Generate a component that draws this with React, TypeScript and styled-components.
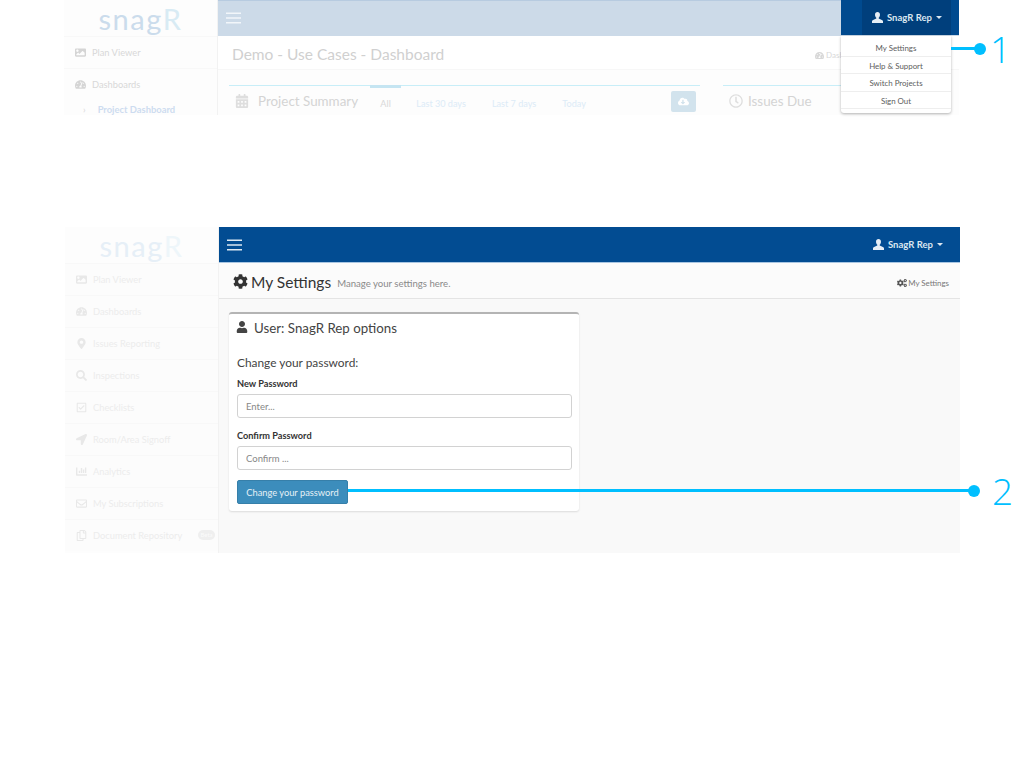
import styled, { createGlobalStyle } from "styled-components";
import {
  FaImage,
  FaTachometerAlt,
  FaCalendarAlt,
  FaRegClock,
  FaCloudDownloadAlt,
  FaUser,
  FaCog,
  FaCogs,
  FaMapMarkerAlt,
  FaSearch,
  FaRegCheckSquare,
  FaLocationArrow,
  FaChartBar,
  FaRegEnvelope,
  FaRegCopy,
} from "react-icons/fa";

const GlobalStyle = createGlobalStyle`
  html, body {
    margin: 0;
    padding: 0;
    background: #fff;
    font-family: "Lato", "Open Sans", sans-serif;
  }
  * { box-sizing: border-box; }
`;

const Page = styled.div`
  position: relative;
  width: 1024px;
  height: 768px;
  overflow: hidden;
`;

const Shot = styled.section<{ $left: number; $top: number; $height: number }>`
  display: flex;
  width: 895px;
  height: ${(p) => p.$height}px;
  margin-left: ${(p) => p.$left}px;
  margin-top: ${(p) => p.$top}px;
  overflow: hidden;
`;

const Sidebar = styled.aside`
  width: 154px;
  flex: none;
  background: #fdfdfd;
  border-right: 1px solid #f2f2f2;
`;

const Logo = styled.div<{ $faint?: boolean }>`
  height: 36px;
  display: flex;
  justify-content: center;
  align-items: center;
  font-size: 29px;
  font-weight: 400;
  letter-spacing: 1.5px;
  line-height: 35px;
  color: ${(p) => (p.$faint ? "#e6eff7" : "#cbdcec")};
  span {
    color: ${(p) => (p.$faint ? "#eef6fa" : "#d8ebf4")};
  }
`;

const NavItem = styled.div`
  height: 32px;
  display: flex;
  align-items: center;
  gap: 6px;
  padding-left: 11px;
  font-size: 9.3px;
  color: #ececec;
  border-top: 1px solid #f8f8f8;
  background: #fcfcfc;
  position: relative;
  svg {
    width: 11px;
    height: 11px;
    flex: none;
    color: #e8e8e8;
  }
`;

const TopNavItem = styled(NavItem)`
  color: #d8d8d8;
  background: #fdfdfd;
  svg {
    color: #d5d5d5;
  }
`;

const SubItem = styled.div`
  display: flex;
  align-items: center;
  gap: 12px;
  padding: 4px 0 0 19px;
  font-size: 9.4px;
  font-weight: 700;
  color: #cddcf0;
  &::before {
    content: "›";
    color: #d8d8d8;
    font-weight: 400;
  }
`;

const Beta = styled.span`
  position: absolute;
  right: 3px;
  top: 10px;
  width: 17px;
  height: 10px;
  border-radius: 5px;
  background: #efefef;
  color: #fbfbfb;
  font-size: 6px;
  line-height: 10px;
  text-align: center;
`;

const Main = styled.main<{ $bg: string }>`
  flex: 1;
  min-width: 0;
  display: flex;
  flex-direction: column;
  background: ${(p) => p.$bg};
`;

const Header = styled.header<{ $bg: string; $edge: string; $topEdge?: string }>`
  height: 36px;
  flex: none;
  display: flex;
  align-items: center;
  justify-content: space-between;
  background: ${(p) => p.$bg};
  border-bottom: 1px solid ${(p) => p.$edge};
  box-shadow: ${(p) => (p.$topEdge ? `inset 0 1px 0 ${p.$topEdge}` : "none")};
`;

const BurgerIcon = styled.svg`
  width: 15px;
  height: 12px;
  margin-left: 8px;
`;

const UserWrap = styled.div`
  width: 118px;
  height: 100%;
  display: flex;
  background: #004a8f;
  padding-left: 21px;
`;

const UserToggle = styled.div<{ $bg?: string; $right?: number }>`
  height: 100%;
  width: 89px;
  margin-right: ${(p) => p.$right || 0}px;
  padding-left: 10px;
  display: flex;
  align-items: center;
  gap: 4px;
  background: ${(p) => p.$bg || "transparent"};
  color: #dbe6f0;
  font-size: 9.5px;
  font-weight: 700;
`;

const UserGlyph = styled.svg`
  width: 11px;
  height: 11px;
  margin-bottom: 1px;
`;

const Caret = styled.i`
  width: 0;
  height: 0;
  border-left: 3px solid transparent;
  border-right: 3px solid transparent;
  border-top: 3px solid #dbe6f0;
`;

const TitleBarFaded = styled.div`
  height: 34px;
  flex: none;
  display: flex;
  align-items: center;
  justify-content: space-between;
  padding: 3px 0 0 14px;
  background: #fff;
  border-bottom: 1px solid #f7f7f7;
  color: #d0d0d0;
  font-size: 15.5px;
`;

const CrumbFaded = styled.span`
  display: flex;
  align-items: center;
  gap: 2px;
  margin: 2px 117px 0 0;
  width: 27px;
  font-size: 8px;
  color: #d8d8d8;
  white-space: nowrap;
  svg {
    flex: none;
    width: 9px;
    height: 9px;
  }
`;

const CardRow = styled.div`
  display: flex;
  gap: 23px;
  padding: 15px 0 0 11px;
`;

const FadedCard = styled.div<{ $width: number; $gap: number }>`
  width: ${(p) => p.$width}px;
  height: 30px;
  display: flex;
  align-items: center;
  border-top: 1px solid #c8eef8;
  color: #d4d4d4;
  font-size: 13.4px;
  gap: ${(p) => p.$gap}px;
  padding-left: 6px;
  svg {
    width: 14px;
    height: 14px;
    color: #dedede;
    flex: none;
  }
`;

const TabRow = styled.div`
  display: flex;
  align-items: stretch;
  align-self: stretch;
  margin-top: -1px;
  margin-left: 3px;
  flex: 1;
  font-size: 9.1px;
`;

const Tab = styled.span<{ $active?: boolean; $width: number }>`
  width: ${(p) => p.$width}px;
  text-align: center;
  padding-top: ${(p) => (p.$active ? 10 : 13)}px;
  color: ${(p) => (p.$active ? "#d8d8d8" : "#dcebf7")};
  border-top: ${(p) => (p.$active ? "3px solid #c5e5f2" : "none")};
`;

const CloudButton = styled.span`
  width: 25px;
  height: 21px;
  margin: 6px 4px 0 auto;
  display: flex;
  align-items: center;
  justify-content: center;
  background: #d2e3ed;
  border-radius: 2px;
  svg {
    width: 11px;
    height: 11px;
    color: #fff;
  }
`;

const Dropdown = styled.ul`
  position: absolute;
  left: 841px;
  top: 36px;
  width: 110px;
  height: 77px;
  margin: 0;
  padding: 3px 0 0;
  list-style: none;
  background: #fff;
  border-radius: 0 0 3px 3px;
  box-shadow: 0 1px 3px rgba(0, 0, 0, 0.3);
`;

const DropdownItem = styled.li`
  height: 17.5px;
  line-height: 18.5px;
  text-align: center;
  font-size: 7.9px;
  color: #5c5c5c;
  border-bottom: 1px solid #eeeeee;
`;

const TitleBar = styled.div`
  height: 36px;
  flex: none;
  display: flex;
  align-items: center;
  padding: 2px 0 0 14px;
  background: #fbfbfb;
  border-bottom: 1px solid #e4e4e4;
`;

const PageIcon = styled(FaCog)`
  width: 15px;
  height: 15px;
  color: #333;
  margin-right: 3px;
`;

const PageTitle = styled.h1`
  margin: 0;
  font-size: 15.5px;
  font-weight: 400;
  color: #333;
`;

const PageSub = styled.small`
  margin-left: 6px;
  margin-top: 3px;
  font-size: 9.6px;
  color: #8a8a8a;
`;

const Crumb = styled.span`
  margin: 3px 11px 0 auto;
  display: flex;
  align-items: center;
  gap: 1px;
  font-size: 7.9px;
  color: #777;
  svg {
    width: 10px;
    height: 10px;
    color: #555;
  }
`;

const Content = styled.div`
  flex: 1;
  padding: 13px 0 0 10px;
  background: #f9f9f9;
`;

const Card = styled.div`
  width: 350px;
  height: 199px;
  padding: 0 8px;
  background: #fff;
  border-top: 2px solid #b4b4b4;
  border-radius: 3px;
  box-shadow: 0 1px 2px rgba(0, 0, 0, 0.12);
`;

const CardTitle = styled.h3`
  display: flex;
  align-items: center;
  gap: 6px;
  height: 28px;
  margin: 0;
  font-size: 13.3px;
  font-weight: 400;
  color: #444;
  svg {
    width: 12px;
    height: 12px;
    margin: 0 0 3px -1px;
  }
`;

const SectionTitle = styled.h4`
  margin: 12px 0 0;
  font-size: 11.9px;
  line-height: 18px;
  font-weight: 400;
  color: #444;
`;

const Field = styled.div`
  margin-top: 5px;
  margin-bottom: 11px;
`;

const Label = styled.label`
  display: block;
  height: 17px;
  font-size: 9.2px;
  line-height: 14px;
  font-weight: 700;
  color: #333;
`;

const Input = styled.input`
  display: block;
  width: 335px;
  height: 24px;
  padding: 0 8px;
  border: 1px solid #d2d2d2;
  border-radius: 3px;
  background: #fff;
  font: 400 9.5px "Lato", sans-serif;
  &::placeholder {
    color: #888;
    opacity: 1;
  }
`;

const Button = styled.button`
  display: block;
  width: 111px;
  height: 24px;
  margin-top: -1px;
  padding: 0;
  border: 1px solid #367fa9;
  border-radius: 2px;
  background: #3c8dbc;
  color: #e6f0f6;
  font: 400 9.3px "Lato", sans-serif;
`;

const Leader = styled.div<{ $left: number; $top: number; $width: number }>`
  position: absolute;
  left: ${(p) => p.$left}px;
  top: ${(p) => p.$top}px;
  width: ${(p) => p.$width}px;
  height: 3px;
  background: #00bfff;
  &::after {
    content: "";
    position: absolute;
    right: -6px;
    top: -4.5px;
    width: 12px;
    height: 12px;
    border-radius: 50%;
    background: #00bfff;
  }
`;

const Callout = styled.span<{ $left: number; $top: number }>`
  position: absolute;
  left: ${(p) => p.$left}px;
  top: ${(p) => p.$top}px;
  font: 300 37px/40px "Open Sans", sans-serif;
  color: #00bfff;
`;

function Burger({ color }: { color: string }) {
  return (
    <BurgerIcon viewBox="0 0 15 12">
      <rect y="0.5" width="15" height="1.5" fill={color} />
      <rect y="5.25" width="15" height="1.5" fill={color} />
      <rect y="10" width="15" height="1.5" fill={color} />
    </BurgerIcon>
  );
}

function UserIcon() {
  return (
    <UserGlyph viewBox="0 0 12 12">
      <path
        fill="#e6eef6"
        d="M6 0C4.3 0 3.3 1.2 3.3 3c0 1.4.6 2.6 1.4 3.2v.9L1.2 8.6C.5 8.9 0 9.5 0 10.2V12h12v-1.8c0-.7-.5-1.3-1.2-1.6L7.3 7.1v-.9C8.1 5.6 8.7 4.4 8.7 3 8.7 1.2 7.7 0 6 0z"
      />
    </UserGlyph>
  );
}

const faintNav: [React.ComponentType, string][] = [
  [FaImage, "Plan Viewer"],
  [FaTachometerAlt, "Dashboards"],
  [FaMapMarkerAlt, "Issues Reporting"],
  [FaSearch, "Inspections"],
  [FaRegCheckSquare, "Checklists"],
  [FaLocationArrow, "Room/Area Signoff"],
  [FaChartBar, "Analytics"],
  [FaRegEnvelope, "My Subscriptions"],
  [FaRegCopy, "Document Repository"],
];

export default function App() {
  return (
    <Page>
      <GlobalStyle />

      <Shot $left={64} $top={0} $height={115}>
        <Sidebar>
          <Logo>
            snag<span>R</span>
          </Logo>
          <TopNavItem>
            <FaImage /> Plan Viewer
          </TopNavItem>
          <TopNavItem>
            <FaTachometerAlt /> Dashboards
          </TopNavItem>
          <SubItem>Project Dashboard</SubItem>
        </Sidebar>
        <Main $bg="#fdfdfd">
          <Header $bg="#ccdae8" $edge="#ccdae8" $topEdge="#b7cbe0">
            <Burger color="#f2f6fa" />
            <UserWrap>
              <UserToggle $bg="#003f7c">
                <UserIcon /> SnagR Rep <Caret />
              </UserToggle>
            </UserWrap>
          </Header>
          <TitleBarFaded>
            Demo - Use Cases - Dashboard
            <CrumbFaded>
              <FaTachometerAlt /> Dashboard
            </CrumbFaded>
          </TitleBarFaded>
          <CardRow>
            <FadedCard $width={471} $gap={9}>
              <FaCalendarAlt /> Project Summary
              <TabRow>
                <Tab $active $width={31}>
                  All
                </Tab>
                <Tab $width={80}>Last 30 days</Tab>
                <Tab $width={66}>Last 7 days</Tab>
                <Tab $width={54}>Today</Tab>
                <CloudButton>
                  <FaCloudDownloadAlt />
                </CloudButton>
              </TabRow>
            </FadedCard>
            <FadedCard $width={200} $gap={5}>
              <FaRegClock /> Issues Due
            </FadedCard>
          </CardRow>
        </Main>
      </Shot>

      <Dropdown>
        <DropdownItem>My Settings</DropdownItem>
        <DropdownItem>Help &amp; Support</DropdownItem>
        <DropdownItem>Switch Projects</DropdownItem>
        <DropdownItem>Sign Out</DropdownItem>
      </Dropdown>

      <Shot $left={65} $top={112} $height={326}>
        <Sidebar>
          <Logo $faint>
            snag<span>R</span>
          </Logo>
          {faintNav.map(([Icon, name]) => (
            <NavItem key={name}>
              <Icon /> {name}
              {name === "Document Repository" && <Beta>Beta</Beta>}
            </NavItem>
          ))}
        </Sidebar>
        <Main $bg="#f9f9f9">
          <Header $bg="#024c92" $edge="#a9c6e2">
            <Burger color="#dce8f2" />
            <UserToggle $right={8}>
              <UserIcon /> SnagR Rep <Caret />
            </UserToggle>
          </Header>
          <TitleBar>
            <PageIcon />
            <PageTitle>My Settings</PageTitle>
            <PageSub>Manage your settings here.</PageSub>
            <Crumb>
              <FaCogs /> My Settings
            </Crumb>
          </TitleBar>
          <Content>
            <Card>
              <CardTitle>
                <FaUser /> User: SnagR Rep options
              </CardTitle>
              <SectionTitle>Change your password:</SectionTitle>
              <Field>
                <Label>New Password</Label>
                <Input placeholder="Enter..." />
              </Field>
              <Field>
                <Label>Confirm Password</Label>
                <Input placeholder="Confirm ..." />
              </Field>
              <Button>Change your password</Button>
            </Card>
          </Content>
        </Main>
      </Shot>

      <Leader $left={951} $top={47} $width={29} />
      <Callout $left={990} $top={29}>
        1
      </Callout>
      <Leader $left={348} $top={489} $width={626} />
      <Callout $left={992} $top={471}>
        2
      </Callout>
    </Page>
  );
}
